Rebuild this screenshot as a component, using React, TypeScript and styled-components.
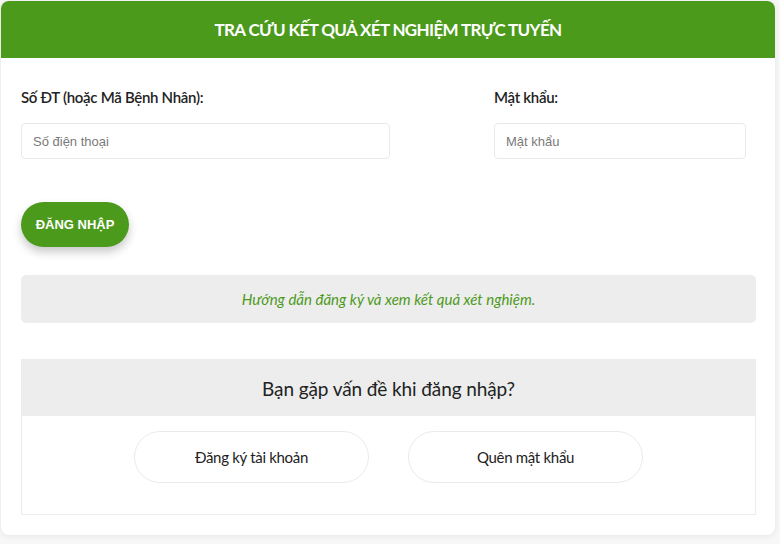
import React from 'react';
import styled, { createGlobalStyle } from 'styled-components';

const GlobalStyle = createGlobalStyle`
    html, body {
        margin: 0;
        padding: 0;
        background: #ffffff;
    }
    * {
        box-sizing: border-box;
    }
`;

const Page = styled.div`
    width: 780px;
    height: 544px;
    padding: 1px 5px 9px 1px;
    background: #f7f7f7;
`;

const Card = styled.div`
    height: 534px;
    background: #fff;
    border-radius: 8px;
    overflow: hidden;
    box-shadow: 0 1px 6px rgba(0, 0, 0, 0.08);
`;

const Header = styled.div`
    height: 57px;
    background: #4c9a1c;
    display: flex;
    align-items: center;
    justify-content: center;
`;

const Title = styled.h1`
    margin: 0;
    color: #fff;
    font-family: Lato, 'Open Sans', sans-serif;
    font-weight: 700;
    font-size: 17px;
    letter-spacing: -0.65px;
    text-transform: uppercase;
`;

const Body = styled.div`
    padding: 30px 19px 0 20px;
    display: flex;
    flex-direction: column;
`;

const FieldRow = styled.div`
    display: grid;
    grid-template-columns: 369px 252px;
    justify-content: space-between;
    padding-right: 10px;
`;

const Field = styled.div`
    display: flex;
    flex-direction: column;
`;

const Label = styled.label`
    font-family: Lato, 'Open Sans', sans-serif;
    font-size: 15px;
    font-weight: 600;
    letter-spacing: -0.3px;
    color: #222;
    line-height: 18px;
    margin-bottom: 17px;
`;

const Input = styled.input`
    height: 36px;
    border: 1px solid #e9e9e9;
    border-radius: 4px;
    padding: 0 11px;
    font-family: 'Liberation Sans', Arial, sans-serif;
    font-size: 13px;
    color: #333;
    outline: none;
    &::placeholder {
        color: #7a7a7a;
    }
`;

const LoginButton = styled.button`
    align-self: flex-start;
    margin-top: 43px;
    height: 45px;
    width: 108px;
    border: none;
    border-radius: 23px;
    background: #4c9a1c;
    color: #fff;
    font-family: 'Liberation Sans', Arial, sans-serif;
    font-weight: 700;
    font-size: 13px;
    box-shadow: 0 5px 10px rgba(0, 0, 0, 0.22);
    cursor: pointer;
`;

const GuideBox = styled.div`
    margin-top: 28px;
    height: 48px;
    border-radius: 5px;
    background: #ededed;
    display: flex;
    align-items: center;
    justify-content: center;
    font-family: Lato, 'Open Sans', sans-serif;
    font-style: italic;
    font-size: 15px;
    color: #4c9a1c;
`;

const HelpBox = styled.div`
    margin-top: 36px;
    border: 1px solid #ececec;
`;

const HelpHeader = styled.div`
    height: 56px;
    background: #ededed;
    display: flex;
    align-items: center;
    justify-content: center;
    font-family: Lato, 'Open Sans', sans-serif;
    font-size: 19px;
    letter-spacing: -0.1px;
    color: #222;
`;

const HelpActions = styled.div`
    display: flex;
    justify-content: center;
    gap: 39px;
    padding: 15px 0 31px;
`;

const PillButton = styled.button`
    width: 235px;
    height: 52px;
    border: 1px solid #ebebeb;
    border-radius: 26px;
    background: #fff;
    font-family: Lato, 'Open Sans', sans-serif;
    font-size: 15px;
    letter-spacing: -0.3px;
    color: #222;
    cursor: pointer;
`;

export default function App() {
    return (
        <>
            <GlobalStyle />
            <Page>
                <Card>
                    <Header>
                        <Title>Tra cứu kết quả xét nghiệm trực tuyến</Title>
                    </Header>
                    <Body>
                        <FieldRow>
                            <Field>
                                <Label>Số ĐT (hoặc Mã Bệnh Nhân):</Label>
                                <Input placeholder='Số điện thoại' />
                            </Field>
                            <Field>
                                <Label>Mật khẩu:</Label>
                                <Input type='password' placeholder='Mật khẩu' />
                            </Field>
                        </FieldRow>
                        <LoginButton>ĐĂNG NHẬP</LoginButton>
                        <GuideBox>Hướng dẫn đăng ký và xem kết quả xét nghiệm.</GuideBox>
                        <HelpBox>
                            <HelpHeader>Bạn gặp vấn đề khi đăng nhập?</HelpHeader>
                            <HelpActions>
                                <PillButton>Đăng ký tài khoản</PillButton>
                                <PillButton>Quên mật khẩu</PillButton>
                            </HelpActions>
                        </HelpBox>
                    </Body>
                </Card>
            </Page>
        </>
    );
}
